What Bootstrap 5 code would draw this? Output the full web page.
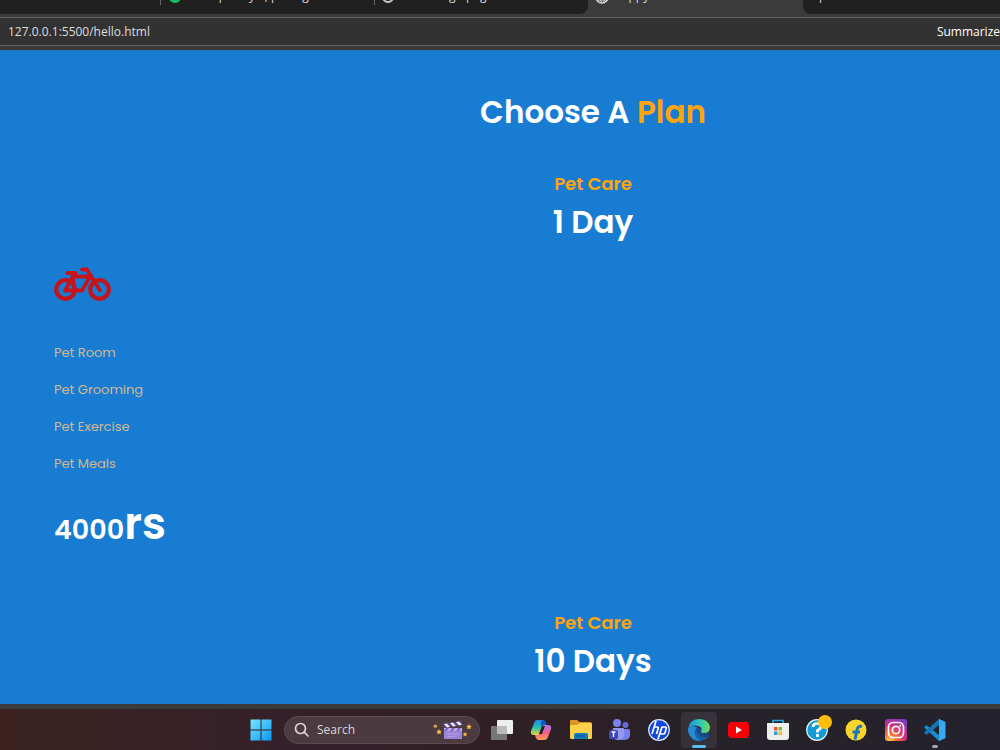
<!DOCTYPE html>
<html lang="en">
<head>
<meta charset="utf-8">
<meta name="viewport" content="width=device-width, initial-scale=1">
<title>Choose A Plan</title>
<link href="https://cdn.jsdelivr.net/npm/bootstrap@5.3.0/dist/css/bootstrap.min.css" rel="stylesheet">
<style>
  body { background: #3b3b3b; font-family: "Open Sans", "Noto Sans", sans-serif; }
  svg { display: block; flex: none; }
  .tab-strip { height: 14px; background: #3b3b3b; overflow: hidden; font-size: 12px; line-height: 16px; color: #dedede; }
  .tab-group { background: #202020; height: 14px; }
  .tab-group.before { width: 588px; border-bottom-right-radius: 8px; }
  .tab-group.after { border-bottom-left-radius: 8px; padding-left: 16px; }
  .tab-current { width: 215px; padding-left: 8px; }
  .tab-item { height: 5px; }
  .tab-item.one { width: 214px; margin-left: 160px; padding-left: 8px; border-left: 1px solid #666; }
  .tab-item.two { padding-left: 8px; border-left: 1px solid #666; }
  .tab-name { margin-top: -12px; }
  .address { margin: 3px 0 4px; height: 29px; background: #323232; border-top: 1px solid #636363; border-bottom: 1px solid #636363; font-size: 12px; padding-left: 8px; }
  .address input { background: none; border: 0; padding: 0; color: #dedede; outline: 0; font-size: 12px; }
  .address button { background: none; border: 0; padding: 0; color: #fff; font-size: 12px; }
  .site { background: #187dd2; font-family: Poppins, Inter, sans-serif; padding: 39px 0 16px 54px; border-top: 1px solid #2870b0; }
  .site h1, .site h2, .site h3 { margin: 0; color: #fff; font-weight: 600; }
  .centered { padding-left: 132px; text-align: center; }
  .site h1, .site h2 { font-size: 31px; line-height: 44px; }
  .site h3, .accent { color: #ffa50b !important; }
  .site h3 { font-size: 18px; line-height: 28px; padding-bottom: 2px; }
  .plan-head { padding-top: 36px; }
  .plan-head.next { padding-top: 49px; }
  .bike { margin: 20px 0 39px; }
  .features li { font-size: 13px; line-height: 20px; margin-bottom: 17px; color: #d3b793; }
  .price { color: #fff; font-weight: 600; font-size: 27px; line-height: 60px; margin-top: 20px; }
  .price span { font-size: 44px; }
  .taskbar { margin-top: 5px; height: 41px; background: linear-gradient(90deg, #3b2221, #35202a 30%, #302025 50%, #272228 68%, #24222d); padding-left: 250px; }
  .taskbar button { border: 0; background: none; padding: 0; width: 36px; height: 36px; position: relative; display: flex; align-items: center; justify-content: center; }
  .taskbar .start { width: 22px; margin-right: 12px; }
  .finder { width: 196px; height: 28px; border-radius: 14px; background: #4b3b40; border: 1px solid #5c4a4f; padding: 0 5px 0 9px; margin-right: 4px; }
  .finder input { width: 116px; border: 0; background: none; color: #e0d9dc; font-size: 12px; padding: 0; outline: 0; }
  .finder input::placeholder { color: #ddd5d8; opacity: 1; }
  .apps { width: 469px; }
  .taskbar .selected { background: #37313a; border-radius: 4px; }
  .selected::after, .running::after { content: ""; position: absolute; bottom: 0; width: 14px; height: 3px; border-radius: 2px; background: #55bff2; }
  .running::after { width: 6px; background: #a5a5a9; }
</style>
</head>
<body class="min-vh-100 d-flex flex-column overflow-hidden">
<header>
  <nav class="tab-strip d-flex" aria-label="Tabs">
    <div class="tab-group before d-flex flex-shrink-0">
      <div class="tab-item one d-flex flex-shrink-0"><svg width="13" height="4" viewBox="0 0 13 4"><circle cx="6" cy="-3" r="6" fill="#1abf6a"/></svg><span class="tab-name text-nowrap ms-3">Simple style, pricing</span></div>
      <div class="tab-item two d-flex"><svg width="11" height="4" viewBox="0 0 11 4"><circle cx="5" cy="-3" r="5" fill="none" stroke="#ccc" stroke-width="2"/></svg><span class="tab-name text-nowrap ms-1">Web design page</span></div>
    </div>
    <div class="tab-current d-flex flex-shrink-0"><svg width="13" height="5" viewBox="0 0 13 5"><circle cx="6" cy="-3" r="6" fill="none" stroke="#ddd" stroke-width="1.5"/><path d="M4-1Q6 6 9-1M1 0h10" fill="none" stroke="#ddd"/></svg><span class="tab-name ms-1">Happy</span></div>
    <div class="tab-group after flex-grow-1 d-flex"><span class="tab-name">p</span></div>
  </nav>
  <div class="address d-flex align-items-center">
    <input class="flex-grow-1" aria-label="Address" value="127.0.0.1:5500/hello.html">
    <button>Summarize</button>
  </div>
</header>
<main class="site flex-grow-1">
  <h1 class="centered">Choose A <span class="accent">Plan</span></h1>
  <section>
    <div class="centered plan-head"><h3>Pet Care</h3><h2>1 Day</h2></div>
    <svg class="bike" width="58" height="40" viewBox="0 0 58 40" fill="none" stroke="#c5141c" stroke-width="4.2" stroke-linecap="round" stroke-linejoin="round"><circle cx="11.5" cy="25.5" r="9.3"/><circle cx="45.5" cy="25.5" r="9.3"/><path stroke-width="3.8" d="M11 26.500L19 12.500H36L28 26.500H11M18.500 12L20.500 26M13.500 9H21.500M28 5.500H33L46 26.500"/></svg>
    <ul class="features list-unstyled m-0"><li>Pet Room</li><li>Pet Grooming</li><li>Pet Exercise</li><li>Pet Meals</li></ul>
    <div class="price">4000<span>rs</span></div>
  </section>
  <section class="centered plan-head next"><h3>Pet Care</h3><h2>10 Days</h2></section>
</main>
<footer class="taskbar d-flex align-items-center">
  <button class="start" aria-label="Start"><svg width="22" height="22" viewBox="0 0 22 22"><defs><linearGradient id="win" x2="1" y2="1"><stop stop-color="#75e7ff"/><stop offset="1" stop-color="#0997f2"/></linearGradient></defs><path fill="url(#win)" d="M1 .5H10.500V10.500H.5V1ZM11.500.5H21.500V10.500H11.500ZM.5 11.500H10.500V21.500H.5ZM11.500 11.500H21.500V21.500H11.500Z"/></svg></button>
  <div class="finder d-flex align-items-center flex-shrink-0">
    <svg width="15" height="15" viewBox="0 0 15 15" fill="none" stroke="#ddd5d8" stroke-width="1.7" stroke-linecap="round"><circle cx="6.500" cy="6.500" r="5"/><path d="M10.200 10.200L14 14"/></svg>
    <input class="ms-2" type="text" placeholder="Search" aria-label="Search">
    <svg width="40" height="22" viewBox="0 0 40 22"><path fill="#9b83da" d="M11 9H29V20H11Z"/><path fill="#c1b0ef" d="M11 9H29V12H11Z"/><path fill="#5c4789" d="M10 5L28 2L29 6L11 9Z"/><path fill="#eee7ff" d="M11 5L14 4.500L17 8L14 8.500ZM17 4L20 3.500L23 7L20 7.500ZM23 3L26 2.500L29 5.500L26 6.500Z"/><path fill="#7c65bb" d="M13 9H16L14 12H11ZM19 9H22L20 12H17ZM25 9H28L26 12H23Z"/><path d="M14 15H26M14 17.500H22" stroke="#b3a0e3"/><path fill="#f6bd42" d="M2 5l.8 1.200 1.500-.1-.8 1.300.6 1.400-1.500-.5L1.300 9.300 1.400 7.700 0 6.800l1.500-.3ZM6 10l.9 1.700 1.900.2-1.400 1.400.4 2L6 14.400l-1.800.9.4-2-1.400-1.400 1.900-.2ZM36 5l.9 1.700 1.900.2-1.400 1.400.4 2L36 9.400l-1.800.9.4-2-1.400-1.400 1.900-.2ZM32 13l.8 1.400 1.600.2-1.200 1.100.4 1.700-1.600-.8-1.600.8.4-1.700-1.200-1.100 1.600-.2Z"/></svg>
  </div>
  <div class="apps d-flex justify-content-between flex-shrink-0">
    <button aria-label="Task view"><svg width="22" height="22" viewBox="0 0 22 22"><rect x="6" y="1" width="16" height="14" rx="1" fill="#eee"/><rect y="7" width="16" height="14" rx="1" fill="#777"/><path d="M6 7H16V15H6Z" fill="#bbb"/></svg></button>
    <button aria-label="Copilot"><svg width="22" height="22" viewBox="0 0 22 22"><defs><linearGradient id="cop1" x2="0" y2="1"><stop stop-color="#218be9"/><stop offset=".5" stop-color="#28bfae"/><stop offset="1" stop-color="#e9d438"/></linearGradient><linearGradient id="cop2" x2="0" y2="1"><stop stop-color="#a677ef"/><stop offset=".5" stop-color="#ef6188"/><stop offset="1" stop-color="#ff9c55"/></linearGradient></defs><path d="M7 1H13Q15 1 16 5L17 7H14Q12 7 11 10L9 16H4Q0 16 1 12L4 4Q5 1 7 1Z" fill="url(#cop1)"/><path d="M13 1Q15 1 16 5L17 7H14L11 7Q10 1 13 1Z" fill="#1555c5"/><path d="M14 6H18Q22 6 21 10L18 18Q17 21 14 21H9Q6 21 5 16H8Q10 16 11 13L12 8Q13 6 14 6Z" fill="url(#cop2)"/><path d="M12 7H15L12 15H9Z" fill="#302025"/></svg></button>
    <button aria-label="File Explorer"><svg width="22" height="20" viewBox="0 0 22 20"><path d="M0 1Q0 0 1 0H7L9.500 2H20Q22 2 22 4V16H0Z" fill="#d99622"/><path d="M0 5H7L10 3H21L22 4V18L21 19H1L0 18Z" fill="#ffd14b"/><path d="M4 19V15Q4 13 6 13H16Q18 13 18 15V19Z" fill="#1479bd"/><path d="M7 16H15" stroke="#0d5d94" stroke-width="1.500"/></svg></button>
    <button aria-label="Teams"><svg width="22" height="22" viewBox="0 0 22 22"><circle cx="8" cy="4" r="4" fill="#7b83eb"/><circle cx="16.500" cy="6" r="3" fill="#686bd5"/><path d="M12 10H19Q21 10 21 12V17Q20 21 15 21H12Z" fill="#7680ec"/><path d="M4 9H14Q15 9 15 10V16Q14 21 9 21Q4 21 3 16Z" fill="#939aee"/><rect y="11" width="9" height="9" rx="1.500" fill="#4047bd"/><path d="M2.500 13H6.500M4.500 13V18" stroke="#fff" stroke-width="1.300"/></svg></button>
    <button aria-label="HP"><svg width="22" height="22" viewBox="0 0 22 22"><circle cx="11" cy="11" r="10.300" fill="#1047dc" stroke="#dce9ff" stroke-width="1.200"/><path d="M8 2L4 15M6.500 8H9Q11 8 10 10L8.500 15M14 8L10 20M13.500 8H17Q19 8 18 10L17 14Q16.500 15 15 15H12" fill="none" stroke="#fff" stroke-width="1.700"/></svg></button>
    <button class="selected" aria-label="Edge"><svg width="22" height="22" viewBox="0 0 22 22"><defs><linearGradient id="edge"><stop stop-color="#228dd5"/><stop offset=".5" stop-color="#2bc0c5"/><stop offset="1" stop-color="#72dd54"/></linearGradient></defs><path fill="#1761ad" d="M0 10Q1 21 12 22Q18 21 21 17Q16 19 12 16Q8 13 10 9Q3 5 0 10Z"/><path fill="url(#edge)" d="M0 11Q1 0 11 0Q20 0 22 8Q22 14 16 14Q12 14 13 12Q15 8 10 7Q4 5 0 11Z"/><path fill="#268bd4" d="M0 10Q3 6 9 8Q5 12 8 18Q10 21 13 22Q2 22 0 12Z"/><path fill="#194a88" d="M9 9Q12 8 13 10Q11 14 16 15Q20 14 21 13V17Q15 20 11 16Q7 12 9 9Z"/></svg></button>
    <button aria-label="YouTube"><svg width="21" height="16" viewBox="0 0 21 16"><rect width="21" height="16" rx="4" fill="#f70008"/><path d="M8 4.500L14 8L8 11.500Z" fill="#fff"/></svg></button>
    <button aria-label="Store"><svg width="22" height="22" viewBox="0 0 22 22"><path d="M6 5V1.500H16V5" fill="none" stroke="#28a5e0" stroke-width="1.700"/><path d="M0 4H22V18Q22 21 19 21H3Q0 21 0 18Z" fill="#eee"/><path d="M7 8H10.500V11.500H7Z" fill="#ef5535"/><path d="M11.500 8H15V11.500H11.500Z" fill="#7ebb31"/><path d="M7 12.500H10.500V16H7Z" fill="#22a4e3"/><path d="M11.500 12.500H15V16H11.500Z" fill="#fcb72b"/></svg></button>
    <button aria-label="Help"><svg width="28" height="28" viewBox="0 0 28 28" overflow="visible"><circle cx="14" cy="14" r="10.300" fill="#149bd5" stroke="#e7f6fc" stroke-width="1.200"/><path d="M10 11Q10 7.500 14 7.500Q18 7.500 18 10.500Q18 12.500 14.500 14.500V16.500M14.500 18V21" fill="none" stroke="#fff" stroke-width="2.700"/><circle cx="22" cy="6" r="7" fill="#ffbd0b"/></svg></button>
    <button aria-label="Flipkart"><svg width="22" height="22" viewBox="0 0 22 22"><circle cx="11" cy="11" r="10.500" fill="#f7d52e"/><path d="M17 7.500Q12.500 6.500 12 11L10 20.500M7.500 13H15" fill="none" stroke="#1976bd" stroke-width="3"/></svg></button>
    <button aria-label="Instagram"><svg width="22" height="22" viewBox="0 0 22 22"><defs><radialGradient id="insta" cx=".2" cy="1" r="1.200"><stop stop-color="#ffce48"/><stop offset=".3" stop-color="#fb6834"/><stop offset=".6" stop-color="#d42b80"/><stop offset="1" stop-color="#713dcc"/></radialGradient></defs><rect width="22" height="22" rx="3" fill="url(#insta)"/><rect x="3.500" y="3.500" width="15" height="15" rx="4.500" fill="none" stroke="#fff" stroke-width="1.700"/><circle cx="11" cy="11" r="3.700" fill="none" stroke="#fff" stroke-width="1.700"/><circle cx="15.300" cy="6.700" r="1" fill="#fff"/></svg></button>
    <button class="running" aria-label="Visual Studio Code"><svg width="22" height="22" viewBox="0 0 22 22"><path d="M15 0L21 3V19L15 22L0 8.500L2.500 6L15 16Z" fill="#168bd1"/><path d="M15 0V6L2.500 16L0 13.500Z" fill="#1675b8"/><path d="M15 0L21.500 3V19L15 22Z" fill="#38a8f2"/></svg></button>
  </div>
</footer>
<script src="https://cdn.jsdelivr.net/npm/bootstrap@5.3.0/dist/js/bootstrap.bundle.min.js"></script>
</body>
</html>
